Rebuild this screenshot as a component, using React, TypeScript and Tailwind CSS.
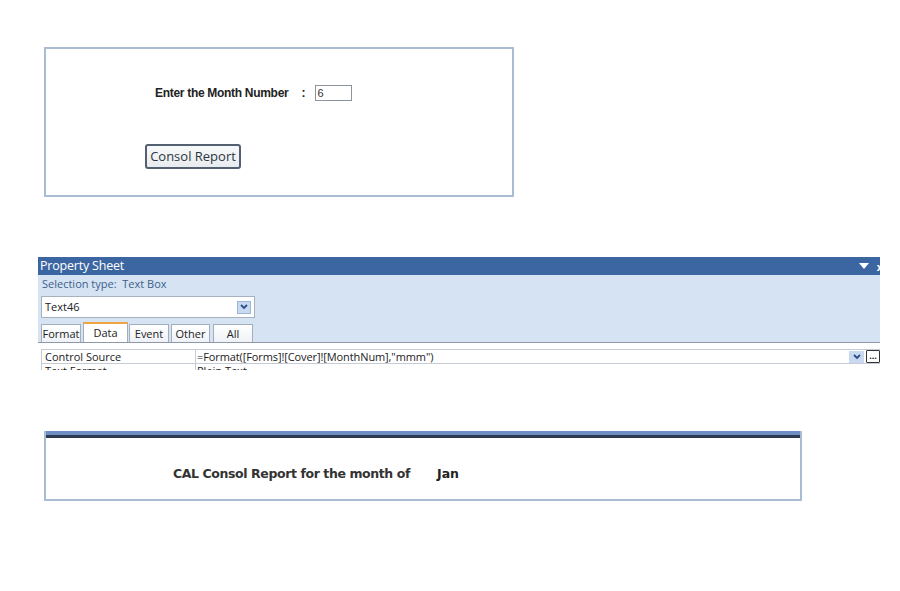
import React from "react";

const seg = { fontFamily: '"Open Sans", "Noto Sans", sans-serif' } as React.CSSProperties;

export default function App() {
  return (
    <div className="w-[900px] h-[591px] bg-white flex flex-col overflow-hidden">
      {/* Panel 1 */}
      <div className="shrink-0 ml-[44px] mt-[47px] w-[470px] h-[150px] border-2 border-[#a9bcd2] flex flex-col">
        <div className="shrink-0 flex items-center mt-[35px] ml-[109px] h-[18px]">
          <span className="text-[12px] font-bold text-[#222] tracking-[-0.3px]" style={{ fontFamily: '"Liberation Sans", Arial, sans-serif' }}>
            Enter the Month Number
          </span>
          <span className="ml-[13px] text-[12px] font-bold text-[#222]" style={{ fontFamily: '"Liberation Sans", Arial, sans-serif' }}>:</span>
          <div className="ml-[10px] w-[37px] h-[16px] border border-[#8c949e] flex items-center pl-[1px] text-[11px] text-[#333]" style={{ fontFamily: '"Liberation Sans", Arial, sans-serif' }}>
            6
          </div>
        </div>
        <div className="shrink-0 ml-[99px] mt-[42px] w-[96px] h-[25px] rounded-[3px] border-2 border-[#52606f] bg-gradient-to-b from-[#f7f8f9] to-[#e9ecef] flex items-center justify-center text-[13px] text-[#2d3640]" style={seg}>
          Consol Report
        </div>
      </div>

      {/* Property sheet */}
      <div className="shrink-0 ml-[38px] mt-[60px] w-[842px] h-[113px] overflow-hidden flex flex-col" style={seg}>
        <div className="shrink-0 h-[18px] bg-[#3c66a1] flex items-center justify-between pl-[2px]">
          <span className="text-white text-[12.5px] leading-none tracking-[-0.2px]">Property Sheet</span>
          <div className="flex items-center gap-[8px] mr-[-3px]">
            <svg width="10" height="6" viewBox="0 0 10 6"><path d="M0 0H10L5 6Z" fill="#fff" /></svg>
            <span className="text-white text-[11px] leading-none font-bold">x</span>
          </div>
        </div>
        <div className="shrink-0 h-[67px] bg-[#d5e3f3] flex flex-col">
          <div className="shrink-0 mt-[2px] h-[14px] pl-[4px] text-[11px] leading-[14px] text-[#3e5f8a]">
            Selection type:&nbsp; Text Box
          </div>
          <div className="shrink-0 ml-[3px] mt-[5px] w-[214px] h-[22px] bg-white border border-[#a7b2c0] flex items-center justify-between pl-[3px] pr-[3px]">
            <span className="text-[11px] text-[#222]">Text46</span>
            <div className="w-[14px] h-[13px] bg-[#c8d9f1] border border-[#9fb5d6] flex items-center justify-center">
              <svg width="8" height="6" viewBox="0 0 8 6"><path d="M1 1L4 4L7 1" stroke="#2d4f86" strokeWidth="1.8" fill="none" /></svg>
            </div>
          </div>
          <div className="shrink-0 ml-[3px] mt-[4px] flex items-end h-[21px]">
            <div className="w-[40px] h-[19px] border border-b-0 border-[#a3adbb] bg-gradient-to-b from-white to-[#edf1f6] text-[11px] text-[#222] flex items-center justify-center">Format</div>
            <div className="ml-[2px] w-[45px] h-[21px] border border-b-0 border-[#a3adbb] border-t-2 border-t-[#f0a640] bg-white text-[11px] text-[#222] flex items-start pt-[1px] justify-center">Data</div>
            <div className="ml-[1px] w-[40px] h-[19px] border border-b-0 border-[#a3adbb] bg-gradient-to-b from-white to-[#edf1f6] text-[11px] text-[#222] flex items-center justify-center">Event</div>
            <div className="ml-[2px] w-[39px] h-[19px] border border-b-0 border-[#a3adbb] bg-gradient-to-b from-white to-[#edf1f6] text-[11px] text-[#222] flex items-center justify-center">Other</div>
            <div className="ml-[3px] w-[40px] h-[19px] border border-b-0 border-[#a3adbb] bg-gradient-to-b from-white to-[#edf1f6] text-[11px] text-[#222] flex items-center justify-center">All</div>
          </div>
        </div>
        <div className="shrink-0 h-[28px] bg-white border-t border-[#8e98a6] flex flex-col pl-[3px]">
          <div className="shrink-0 mt-[6px] h-[15px] flex border-t border-b border-l border-[#c5ccd6]">
            <div className="w-[154px] border-r border-[#c5ccd6] text-[11px] leading-[13px] pl-[3px] text-[#222]">Control Source</div>
            <div className="flex-1 flex items-center justify-between pl-[1px]">
              <span className="text-[11px] leading-[13px] text-[#222] tracking-[-0.1px]">=Format([Forms]![Cover]![MonthNum],"mmm")</span>
              <div className="flex items-center">
                <div className="w-[15px] h-[12px] bg-[#c8d9f1] flex items-center justify-center">
                  <svg width="8" height="6" viewBox="0 0 8 6"><path d="M1 1L4 4L7 1" stroke="#2d4f86" strokeWidth="1.8" fill="none" /></svg>
                </div>
                <div className="ml-[2px] w-[14px] h-[13px] border border-[#333] rounded-[1px] bg-white flex items-end justify-center pb-[2px]">
                  <span className="text-[9px] leading-none font-bold text-[#111]">...</span>
                </div>
              </div>
            </div>
          </div>
          <div className="shrink-0 h-[15px] flex border-l border-[#c5ccd6]">
            <div className="w-[154px] border-r border-[#c5ccd6] text-[11px] leading-[13px] pl-[3px] text-[#222]">Text Format</div>
            <div className="flex-1 text-[11px] leading-[13px] pl-[1px] text-[#222]">Plain Text</div>
          </div>
        </div>
      </div>

      {/* Report */}
      <div className="shrink-0 ml-[44px] mt-[61px] w-[758px] h-[70px] border-2 border-t-0 border-[#a9bcd2] flex flex-col">
        <div className="shrink-0 h-[4px] bg-[#6d8fc4]" />
        <div className="shrink-0 h-[3px] bg-[#2c3a4e]" />
        <div className="shrink-0 flex items-center mt-[27px] text-[12.5px] font-bold text-[#333]" style={{ fontFamily: 'Tahoma, "DejaVu Sans", sans-serif' }}>
          <span className="ml-[127px] tracking-[-0.4px]">CAL Consol Report for the month of</span>
          <span className="ml-[27px] text-[#222]">Jan</span>
        </div>
      </div>
    </div>
  );
}
